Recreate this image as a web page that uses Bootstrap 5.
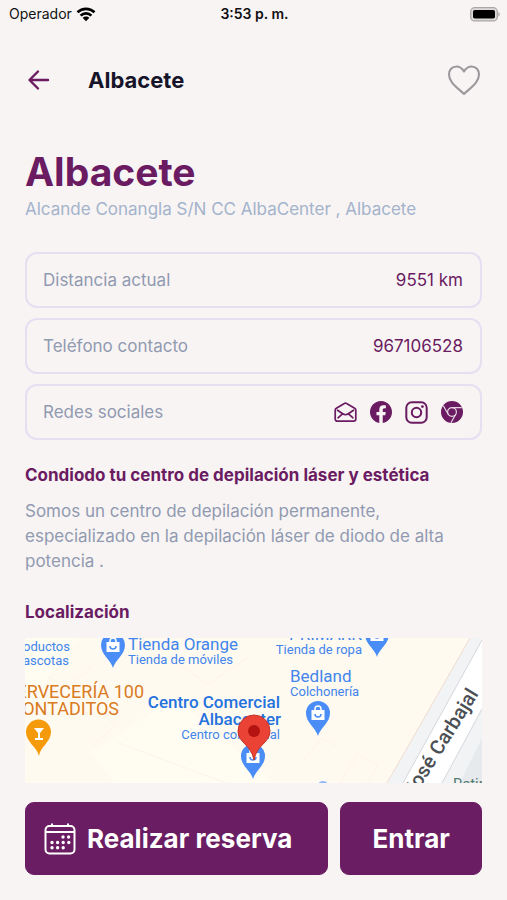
<!DOCTYPE html>
<html lang="es">
<head>
<meta charset="utf-8">
<meta name="viewport" content="width=device-width, initial-scale=1">
<title>Albacete</title>
<link href="https://cdn.jsdelivr.net/npm/bootstrap@5.3.0/dist/css/bootstrap.min.css" rel="stylesheet">
<style>
  :root { --plum: #6a1b61; --slate: #909ab0; --mist: #a3b3cb; }
  body { background: #f8f4f4; font-family: Inter, "DM Sans", sans-serif; font-size: 17px; line-height: 24px; color: var(--slate); }
  svg { display: block; flex: none; }
  .status-bar { height: 28px; padding: 0 7px 0 9px; color: #111; font-size: 14px; }
  .status-bar > * { flex: 1 1 0; }
  .page-pad { padding-left: 25px; padding-right: 25px; }
  .top-bar { height: 104px; }
  .top-bar h2 { font-size: 22px; line-height: 28px; color: #17142a; margin-left: 36px; }
  .icon-btn { padding: 0; border: 0; background: none; }
  .plum { color: var(--plum); }
  .center-name { font-size: 39px; line-height: 48px; margin-top: 16px; }
  .address { color: var(--mist); margin: 1px 0 31px; }
  .info-list { gap: 10px; }
  .info-box { border: 2px solid #e4dff1; border-radius: 12px; height: 56px; padding: 0 17px 0 16px; }
  .info-box a { text-decoration: none; color: var(--plum); }
  .socials { gap: 13px; }
  .section-title { font-size: 17px; line-height: 24px; font-weight: 700; color: var(--plum); }
  .about-title { margin: 23px 0 12px; }
  .map-title { margin: 26px 0 14px; }
  .about { line-height: 25px; }
  .map { height: 145px; overflow: hidden; }
  .map svg { width: 100%; height: 100%; }
  .map text { font-family: Roboto, sans-serif; }
  .actions { margin-top: 19px; gap: 12px; padding-bottom: 24px; }
  .btn-plum { --bs-btn-bg: #6a1d62; --bs-btn-color: #fff; --bs-btn-hover-bg: #571650; --bs-btn-hover-color: #fff; --bs-btn-border-color: #6a1d62; --bs-btn-border-radius: 9px; height: 73px; font-size: 26px; font-weight: 700; white-space: nowrap; }
  .reserve { flex: 1 1 0; padding: 0 18px; gap: 11px; }
  .enter { flex: 0 0 31%; padding: 0; }
</style>
</head>
<body>
<div class="status-bar d-flex align-items-center">
  <div class="d-flex align-items-center gap-1"><span>Operador</span>
    <svg width="20" height="15" viewBox="0 0 20 15" fill="none" stroke="#000" stroke-width="2.6"><path d="M1.500 5.300C6.200.7 13.800.7 18.500 5.300M4.600 8.600c3-3 7.800-3 10.800 0"/><path d="M10 14.200 6.600 10.800c1.900-1.800 4.900-1.800 6.800 0z" fill="#000" stroke="none"/></svg>
  </div>
  <div class="text-center fw-semibold">3:53 p. m.</div>
  <div class="d-flex justify-content-end"><svg width="30" height="15" viewBox="0 0 30 15"><rect x=".7" y=".7" width="26.600" height="13.200" rx="4" fill="#dedada" stroke="#aaa7a7" stroke-width="1.300"/><rect x="3" y="3" width="22" height="8.600" rx="1.800"/><path d="M28.300 5c2 .8 2 3.800 0 4.600z" fill="#aaa7a7"/></svg></div>
</div>

<header class="top-bar page-pad d-flex align-items-center">
  <button class="icon-btn" type="button" aria-label="Volver"><svg width="27" height="24" viewBox="0 0 27 24" fill="none" stroke="#6a1b61" stroke-width="2.400" stroke-linecap="round" stroke-linejoin="round"><path d="M23 12H5M13 3.500 4.500 12l8.500 8.500"/></svg></button>
  <h2 class="mb-0 fw-bold">Albacete</h2>
  <button class="icon-btn ms-auto" type="button" aria-label="Favorito"><svg width="36" height="34" viewBox="0 0 36 34" fill="none" stroke="#9c999d" stroke-width="2.100" stroke-linejoin="round"><path d="M18 8.500C15.800 4.800 13.200 3.500 10.500 3.500 6 3.500 3 7 3 11.500c0 7.500 7.500 12.500 15 19.500 7.500-7 15-12 15-19.500 0-4.500-3-8-7.500-8-2.700 0-5.300 1.300-7.500 5z"/></svg></button>
</header>

<main class="page-pad">
  <h1 class="center-name fw-bold plum mb-0">Albacete</h1>
  <p class="address">Alcande Conangla S/N CC AlbaCenter , Albacete</p>

  <div class="info-list d-grid">
    <div class="info-box d-flex align-items-center justify-content-between"><span>Distancia actual</span><span class="plum">9551 km</span></div>
    <div class="info-box d-flex align-items-center justify-content-between"><span>Teléfono contacto</span><a href="tel:967106528">967106528</a></div>
    <div class="info-box d-flex align-items-center justify-content-between"><span>Redes sociales</span>
      <div class="socials d-flex align-items-center">
        <a href="#" aria-label="Correo"><svg width="23" height="22" viewBox="0 0 23 22" fill="none" stroke="currentColor" stroke-width="1.700" stroke-linejoin="round" stroke-linecap="round"><path d="M1.200 9.200c0-1 .3-1.600 1.100-2L10.400 2.400c.8-.5 1.400-.5 2.200 0l8.100 4.800c.8.4 1.100 1 1.100 2V18c0 1.300-.9 2.200-2.200 2.200H3.400c-1.300 0-2.200-.9-2.200-2.200z"/><path d="m3.500 9.200 5.200 3.600c1.900 1.300 3.700 1.300 5.600 0l5.200-3.600M4 16.800l4.500-4M19 16.800l-4.500-4"/></svg></a>
        <a href="#" aria-label="Facebook"><svg width="22" height="22" viewBox="0 0 16 16" fill="currentColor"><path d="M16 8.049c0-4.446-3.582-8.050-8-8.050C3.580 0-.002 3.603-.002 8.050c0 4.017 2.926 7.347 6.750 7.951v-5.625h-2.030V8.050H6.750V6.275c0-2.017 1.195-3.131 3.022-3.131.876 0 1.791.157 1.791.157v1.980h-1.009c-.993 0-1.303.621-1.303 1.258v1.510h2.218l-.354 2.326H9.250V16c3.824-.604 6.750-3.934 6.750-7.951"/></svg></a>
        <a href="#" aria-label="Instagram"><svg width="23" height="23" viewBox="0 0 23 23" fill="none" stroke="currentColor" stroke-width="2"><rect x="1.300" y="1.300" width="20.400" height="20.400" rx="5.500"/><circle cx="11.500" cy="11.500" r="4.700"/><circle cx="17.400" cy="5.600" r="1.400" fill="currentColor" stroke="none"/></svg></a>
        <a href="#" aria-label="Sitio web"><svg width="22" height="22" viewBox="0 0 22 22" fill="none" stroke="#e4d5e2" stroke-width="1.200"><circle cx="11" cy="11" r="11" fill="#6a1b61" stroke="none"/><circle cx="11" cy="11" r="4.400"/><path d="M11 6.600h9.800M7.200 13.300 2.300 4.800M14.800 13.300l-4.900 8.500"/></svg></a>
      </div>
    </div>
  </div>

  <h3 class="section-title about-title">Condiodo tu centro de depilación láser y estética</h3>
  <p class="about mb-0">Somos un centro de depilación permanente, especializado en la depilación láser de diodo de alta potencia .</p>
  <h3 class="section-title map-title">Localización</h3>

  <div class="map">
    <svg viewBox="0 0 457 145" preserveAspectRatio="xMidYMid slice" role="img" aria-label="Mapa de la localización">
      <defs>
        <g id="shop"><path d="M0 22C-2 14-12 9-12-1a12 12 0 0 1 24 0C12 9 2 14 0 22z" fill="#4a8df6"/><path d="M-6.500-4h13V6h-13z" fill="#fff"/><path d="M-3-4v-1a3 3 0 0 1 6 0v1" fill="none" stroke="#fff" stroke-width="1.500"/><path d="M-3 0a3 3 0 0 0 6 0" fill="none" stroke="#4a8df6" stroke-width="1.500"/></g>
      </defs>
      <rect width="457" height="145" fill="#fffaf0"/>
      <path d="M0 0h55L0 70zM90 145 65 115 150 60 250 145z" fill="#fffcf2"/>
      <path d="M22 38l20 12 24-21M65 66l26 21-24 20M94 105l107 40M147 22l36 24 42-28M315 145l18-29 20 11-11 18M278 123l19-23 15 8" fill="none" stroke="#fbf4e8"/>
      <path d="M457 0H445L362 145h95z" fill="#f1f3f5"/>
      <path d="M445 0 362 145" stroke="#efddcf" fill="none"/>
      <path d="M457 2 378 145h39L457 71z" fill="#fff"/>
      <path d="M457 2 378 145M457 71 417 145" stroke="#d3d7dc" fill="none"/>
      <path d="M457 100 435 145h22z" fill="#e7eaec"/>
      <g fill="#4285ec" font-size="13">
        <text x="45" y="13" text-anchor="end">Productos</text><text x="44" y="27" text-anchor="end">mascotas</text>
        <text x="103" y="12" font-size="17">Tienda Orange</text><text x="103" y="26">Tienda de móviles</text>
        <text x="337" y="2" font-size="17" text-anchor="end">PRIMARK</text><text x="337" y="16" text-anchor="end">Tienda de ropa</text>
        <text x="265" y="44" font-size="17">Bedland</text><text x="265" y="58">Colchonería</text>
        <g fill="#2472de" font-size="17" font-weight="500" text-anchor="end"><text x="255" y="70">Centro Comercial</text><text x="256" y="87">Albacenter</text></g>
        <text x="255" y="101" text-anchor="end">Centro comercial</text>
      </g>
      <g fill="#d97b1e" font-size="18" text-anchor="end"><text x="119" y="60">CERVECERÍA 100</text><text x="94" y="77">MONTADITOS</text></g>
      <use href="#shop" x="88" y="8"/><use href="#shop" x="352" y="-3"/><use href="#shop" x="293" y="76"/><use href="#shop" x="228" y="119"/>
      <path d="M14 118C12 109 1 104 1 94a12.500 12.500 0 0 1 25 0c0 10-11 15-12 24z" fill="#f59b0b"/>
      <path d="M9 90h10l-4 5v5h3v2h-8v-2h3v-5z" fill="#fff"/>
      <path d="M229 122c-3-16-16-17-16-29a16 16 0 0 1 32 0c0 12-13 13-16 29z" fill="#ea4335" stroke="#c3352b"/><circle cx="229" cy="93" r="6" fill="#b31412"/>
      <circle cx="298" cy="149" r="6" fill="#8db8fa"/>
      <text transform="translate(454 56) rotate(-58)" text-anchor="end" font-size="20" font-weight="500" fill="#4b4f54">José Carbajal</text>
      <text x="428" y="151" font-size="15" fill="#557a72">Retiro</text>
    </svg>
  </div>

  <div class="actions d-flex">
    <button type="button" class="btn btn-plum reserve d-flex align-items-center"><svg width="32" height="32" viewBox="0 0 32 32" fill="none" stroke="#fff" stroke-width="2"><rect x="1.500" y="3" width="29" height="27.500" rx="4"/><path d="M2 9h28M8 .5V4M24 .5V4"/><path stroke-width="3.400" stroke-linecap="round" stroke-dasharray="0 5.600" d="M19 14h6M8 19.500h17.200M8 24.800h11.600"/></svg><span>Realizar reserva</span></button>
    <button type="button" class="btn btn-plum enter">Entrar</button>
  </div>
</main>
<script src="https://cdn.jsdelivr.net/npm/bootstrap@5.3.0/dist/js/bootstrap.bundle.min.js"></script>
</body>
</html>
